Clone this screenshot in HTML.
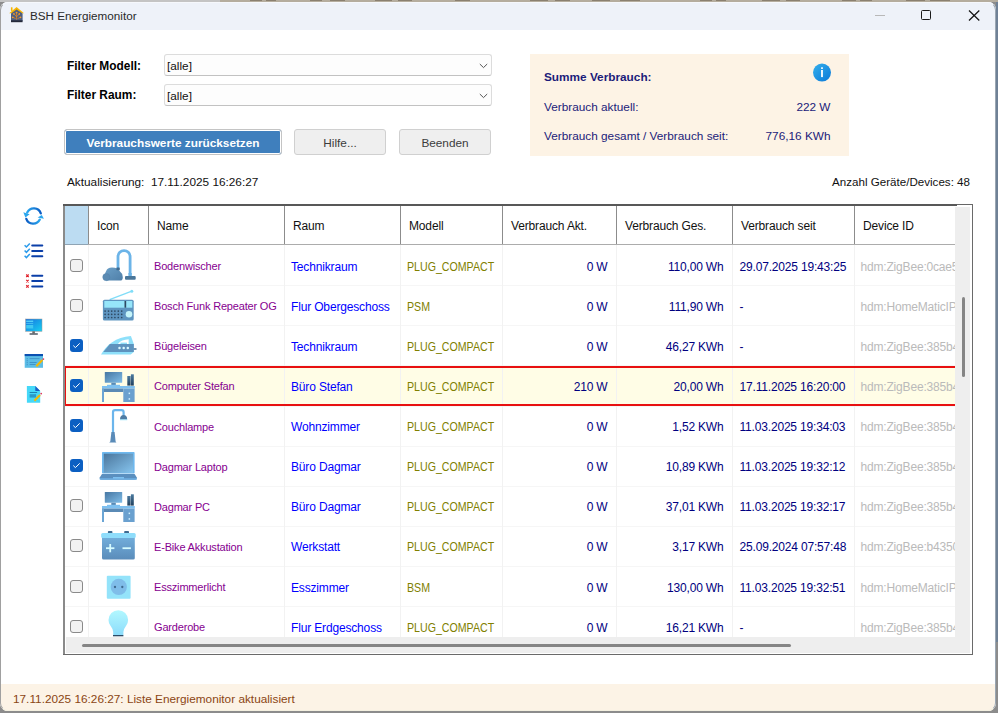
<!DOCTYPE html>
<html><head><meta charset="utf-8">
<style>
*{box-sizing:border-box}
html,body{margin:0;padding:0}
body{width:998px;height:713px;overflow:hidden;position:relative;background:#8c8c8c;font-family:"Liberation Sans",sans-serif;color:#000}
.abs{position:absolute}
.t{position:absolute;white-space:nowrap;line-height:1}
#win{left:0;top:0;width:998px;height:713px;background:#fff;clip-path:inset(2px 2px 2px 0 round 8px)}
#frame{left:0;top:2px;width:996px;height:709px;border:1px solid #a0a0a0;border-top-color:#f6f8fc;border-right-color:#9aa6b2;border-bottom-color:#f4f0e0;border-radius:8px;pointer-events:none}
.lbl{font-size:11.9px;font-weight:bold;color:#000}
.combo{position:absolute;left:164px;width:328px;height:22px;background:#fdfdfd;border:1px solid #dcdcdc;border-bottom-color:#c2c2c2;border-radius:3px}
.combo .v{left:2px;top:6px;font-size:11.8px;color:#111}
.btn{position:absolute;top:129px;height:26px;border:1px solid #d0d0d0;border-radius:3px;background:#efefef;font-size:11.8px;color:#3c3c3c;text-align:center;line-height:26px}
#panel{left:530px;top:54px;width:319px;height:102px;background:#fdf3e5}
#panel .t{color:#1b1b7a;font-size:11.8px}
#gclip{left:65px;top:206px;width:890px;height:431px;overflow:hidden}
.hd{top:14px;font-size:12px;letter-spacing:-0.15px;color:#111}
.nm{font-size:11px;letter-spacing:-0.18px;color:#860090}
.tx{font-size:12px;letter-spacing:-0.18px}
.rm{color:#0000ff;letter-spacing:-0.16px}
.md{color:#808000;transform:scaleX(0.885);transform-origin:0 0;letter-spacing:0}
.nu{color:#000080}
.di{color:#bababa}
.cb{position:absolute;width:13px;height:13px;border-radius:3px}
.cb.off{border:1px solid #8a8a8a;background:#f2f2f2}
.cb.on{background:#0b5fc2}
</style></head><body>
<div class="abs" style="left:0;top:0;width:998px;height:2px;background:#b5ad9e"></div>
<div class="abs" style="left:0;top:0;width:220px;height:2px;background:#c4c4c4"></div>
<div class="abs" style="left:250px;top:0;width:12px;height:1px;background:#8a8070"></div><div class="abs" style="left:266px;top:0;width:10px;height:1px;background:#8a8070"></div><div class="abs" style="left:310px;top:0;width:12px;height:1px;background:#8a8070"></div><div class="abs" style="left:330px;top:0;width:15px;height:1px;background:#8a8070"></div><div class="abs" style="left:375px;top:0;width:17px;height:1px;background:#8a8070"></div><div class="abs" style="left:398px;top:0;width:14px;height:1px;background:#8a8070"></div><div class="abs" style="left:455px;top:0;width:15px;height:1px;background:#8a8070"></div><div class="abs" style="left:530px;top:0;width:18px;height:1px;background:#8a8070"></div><div class="abs" style="left:555px;top:0;width:15px;height:1px;background:#8a8070"></div><div class="abs" style="left:592px;top:0;width:18px;height:1px;background:#8a8070"></div><div class="abs" style="left:620px;top:0;width:20px;height:1px;background:#8a8070"></div><div class="abs" style="left:700px;top:0;width:12px;height:1px;background:#8a8070"></div><div class="abs" style="left:716px;top:0;width:10px;height:1px;background:#8a8070"></div><div class="abs" style="left:762px;top:0;width:18px;height:1px;background:#8a8070"></div><div class="abs" style="left:786px;top:0;width:14px;height:1px;background:#8a8070"></div><div class="abs" style="left:842px;top:0;width:14px;height:1px;background:#8a8070"></div><div class="abs" style="left:860px;top:0;width:12px;height:1px;background:#8a8070"></div><div class="abs" style="left:906px;top:0;width:19px;height:1px;background:#8a8070"></div><div class="abs" style="left:930px;top:0;width:20px;height:1px;background:#8a8070"></div>
<div class="abs" style="left:996px;top:2px;width:2px;height:640px;background:#6f8196"></div>
<div class="abs" id="win">
  <div class="abs" style="left:0;top:0;width:998px;height:30px;background:#eef2f9"></div>
  <svg class="abs" style="left:8px;top:6px" width="18" height="18" viewBox="8 6 18 18">
    <path d="M9.2 13.3L16.6 6.9L24 13.3Z" fill="#f7b500"/>
    <rect x="10.9" y="7.3" width="1.6" height="3.6" fill="#f7b500"/>
    <path d="M11 21V13.6L16.6 9.4L22.6 13.6V21Z" fill="#4e5f80"/>
    <rect x="11" y="20.3" width="11.6" height="1.9" fill="#23293a"/>
    <g stroke="#f08a1c" stroke-width="0.7" fill="none"><path d="M16.6 19.8V12.8M16.6 16.8L14.2 14.2M16.6 16.8L19 14.2M15.6 18.6L13 17.4M17.6 18.6L20.2 17.4"/></g>
    <g fill="#f59a2a"><circle cx="16.6" cy="12.6" r="0.95"/><circle cx="13.9" cy="13.9" r="0.85"/><circle cx="19.3" cy="13.9" r="0.85"/><circle cx="12.7" cy="17.3" r="0.85"/><circle cx="20.5" cy="17.3" r="0.85"/></g>
  </svg>
  <div class="t" style="left:30px;top:9.5px;font-size:11.7px;color:#2a2a2a;-webkit-font-smoothing:antialiased">BSH Energiemonitor</div>
  <div class="abs" style="left:875px;top:15px;width:10px;height:1px;background:#b8b8b8"></div>
  <div class="abs" style="left:921px;top:10px;width:10px;height:10px;border:1.2px solid #1a1a1a;border-radius:1.5px"></div>
  <svg class="abs" style="left:966.5px;top:7.5px" width="14" height="14" viewBox="0 0 14 14"><path d="M2 2.5L12.3 12.5M12.3 2.5L2 12.5" stroke="#151515" stroke-width="1.25"/></svg>

  <div class="t lbl" style="left:67px;top:61px">Filter Modell:</div>
  <div class="t lbl" style="left:67px;top:90px">Filter Raum:</div>
  <div class="combo" style="top:54px"><span class="t v">[alle]</span>
    <svg class="abs" style="left:314px;top:8px" width="9" height="6" viewBox="0 0 9 6"><path d="M0.8 1L4.5 4.6L8.2 1" fill="none" stroke="#555" stroke-width="1"/></svg></div>
  <div class="combo" style="top:84px"><span class="t v">[alle]</span>
    <svg class="abs" style="left:314px;top:8px" width="9" height="6" viewBox="0 0 9 6"><path d="M0.8 1L4.5 4.6L8.2 1" fill="none" stroke="#555" stroke-width="1"/></svg></div>

  <div class="btn" style="left:64px;width:218px;background:#3f7fbd;border-color:#c4c4c4;color:#fff;font-weight:bold;box-shadow:inset 0 0 0 1px #fff">Verbrauchswerte zurücksetzen</div>
  <div class="btn" style="left:294px;width:92px">Hilfe...</div>
  <div class="btn" style="left:399px;width:92px">Beenden</div>

  <div class="t" style="left:67px;top:177px;font-size:11.8px;color:#111">Aktualisierung:&nbsp; 17.11.2025 16:26:27</div>
  <div class="t" style="right:28px;top:176px;font-size:11.6px;color:#111">Anzahl Geräte/Devices: 48</div>

  <div class="abs" id="panel">
    <div class="t" style="left:14px;top:17.5px;font-weight:bold">Summe Verbrauch:</div>
    <div class="t" style="left:14px;top:48px">Verbrauch aktuell:</div>
    <div class="t" style="right:18.5px;top:48px">222 W</div>
    <div class="t" style="left:14px;top:77px">Verbrauch gesamt / Verbrauch seit:</div>
    <div class="t" style="right:18.5px;top:77px">776,16 KWh</div>
    <svg class="abs" style="left:283px;top:9px" width="18" height="19" viewBox="0 0 18 19">
      <defs><linearGradient id="gi" x1="0" y1="0" x2="1" y2="1"><stop offset="0" stop-color="#35b0ec"/><stop offset="1" stop-color="#0a78d8"/></linearGradient></defs>
      <circle cx="9" cy="9.6" r="9" fill="url(#gi)"/>
      <rect x="8.1" y="4.2" width="1.8" height="1.8" rx="0.4" fill="#fff"/>
      <rect x="8.1" y="7" width="1.8" height="7.1" fill="#fff"/>
    </svg>
  </div>

  <svg class="abs" style="left:15px;top:195px" width="40" height="215" viewBox="15 195 40 215">
<defs>
<linearGradient id="gr1" x1="1" y1="0" x2="0" y2="0"><stop offset="0" stop-color="#0b5cc4"/><stop offset="1" stop-color="#2aa6ee"/></linearGradient>
<linearGradient id="gr2" x1="0" y1="0" x2="1" y2="0"><stop offset="0" stop-color="#0b5cc4"/><stop offset="1" stop-color="#2aa6ee"/></linearGradient>
<linearGradient id="gmon" x1="0" y1="0" x2="1" y2="1"><stop offset="0" stop-color="#1670e0"/><stop offset="1" stop-color="#18d0f0"/></linearGradient>
</defs>
<path d="M40.8 213.4A7.35 7.35 0 0 0 27.2 212.6" fill="none" stroke="url(#gr1)" stroke-width="2.3" stroke-linecap="round"/>
<path d="M23.3 212.2L29.6 214.3L25.4 217.4Z" fill="#2aa6ee"/>
<path d="M26.3 218.9A7.35 7.35 0 0 0 39.8 219.6" fill="none" stroke="url(#gr2)" stroke-width="2.3" stroke-linecap="round"/>
<path d="M43.9 218.8L37.6 217.6L41.8 214.9Z" fill="#2aa6ee"/>
<g fill="none" stroke="#2b9beb" stroke-width="1.5">
<path d="M24.6 245.2L26.4 247L29.8 243.4"/><path d="M24.6 250.5L26.4 252.3L29.8 248.7"/><path d="M24.6 255.8L26.4 257.6L29.8 254"/></g>
<g stroke="#0b3fa8" stroke-width="2" stroke-linecap="round">
<line x1="32.2" y1="245.4" x2="42.3" y2="245.4"/><line x1="32.2" y1="250.9" x2="42.3" y2="250.9"/><line x1="32.2" y1="256.2" x2="42.3" y2="256.2"/>
<line x1="32.2" y1="275.8" x2="42.3" y2="275.8"/><line x1="32.2" y1="281" x2="42.3" y2="281"/><line x1="32.2" y1="286.5" x2="42.3" y2="286.5"/></g>
<g stroke="#e0202a" stroke-width="1.1">
<path d="M26.2 274.5L28.7 277M28.7 274.5L26.2 277"/><path d="M26.2 279.8L28.7 282.3M28.7 279.8L26.2 282.3"/><path d="M26.2 285.2L28.7 287.7M28.7 285.2L26.2 287.7"/></g>
<rect x="25.6" y="319" width="16.4" height="12.3" fill="url(#gmon)" stroke="#9a9a9a" stroke-width="0.5"/>
<rect x="26.2" y="320.6" width="7" height="1.3" fill="#5ad8f8"/><rect x="26.2" y="322.9" width="7" height="1" fill="#4ac0f0"/><rect x="26.2" y="325" width="7" height="3.5" fill="#40c8f0"/>
<rect x="32.3" y="331.3" width="2.6" height="2.2" fill="#6a6a6a"/><rect x="29.4" y="333.2" width="8.6" height="1.6" rx="0.7" fill="#505a64"/>
<rect x="24.7" y="354" width="18.3" height="13.8" fill="#5cbde6"/><rect x="24.7" y="354" width="18.3" height="2.1" fill="#0b50b0"/>
<g fill="#3a8ac0"><rect x="26.7" y="358.2" width="1" height="1"/><rect x="26.7" y="360.2" width="1" height="1"/><rect x="26.7" y="362.2" width="1" height="1"/><rect x="26.7" y="364.2" width="1" height="1"/>
<rect x="29.6" y="358.3" width="10" height="0.8"/><rect x="29.6" y="362.2" width="7" height="0.8"/><rect x="29.6" y="364.1" width="6" height="0.8"/></g>
<line x1="36.3" y1="366.2" x2="42.4" y2="360.1" stroke="#f5b800" stroke-width="2.1"/><circle cx="43.4" cy="359.1" r="0.9" fill="#e03a5a"/>
<path d="M26.9 385.9H35.3L40.2 391V402.8H26.9Z" fill="#45d8f8"/><path d="M35.3 385.9L40.2 391H35.3Z" fill="#1a5fc6"/>
<rect x="29.6" y="392" width="7.5" height="0.9" fill="#1a7aa8"/><rect x="29.6" y="394.2" width="6.5" height="3.4" fill="#2a9ac8"/>
<line x1="34.4" y1="400.8" x2="40" y2="395" stroke="#f5b800" stroke-width="2.1"/><circle cx="41.2" cy="393.6" r="0.9" fill="#e03a5a"/>
</svg>

  <div class="abs" style="left:63px;top:204px;width:910px;height:451px;background:#fff"></div>
  <div class="abs" style="left:955px;top:207px;width:15px;height:446px;background:#eeeeee"></div>
  <div class="abs" style="left:66px;top:637px;width:904px;height:16px;background:#eeeeee"></div>
  <div class="abs" id="gclip">
  <div class="abs" style="left:0;top:0;width:890px;height:39px;background:#fff"></div>
<div class="abs" style="left:0;top:0;width:23px;height:38px;background:#bcdcf2"></div>
<div class="t hd" style="left:32.00px">Icon</div>
<div class="t hd" style="left:92.00px">Name</div>
<div class="t hd" style="left:228.00px">Raum</div>
<div class="t hd" style="left:344.00px">Modell</div>
<div class="t hd" style="left:446.00px">Verbrauch Akt.</div>
<div class="t hd" style="left:560.00px">Verbrauch Ges.</div>
<div class="t hd" style="left:676.00px">Verbrauch seit</div>
<div class="t hd" style="left:798.00px">Device ID</div>
<div class="abs" style="left:23.00px;top:0;width:1px;height:38px;background:#8c8c8c"></div>
<div class="abs" style="left:83.00px;top:0;width:1px;height:38px;background:#8c8c8c"></div>
<div class="abs" style="left:219.00px;top:0;width:1px;height:38px;background:#8c8c8c"></div>
<div class="abs" style="left:335.00px;top:0;width:1px;height:38px;background:#8c8c8c"></div>
<div class="abs" style="left:437.00px;top:0;width:1px;height:38px;background:#8c8c8c"></div>
<div class="abs" style="left:551.00px;top:0;width:1px;height:38px;background:#8c8c8c"></div>
<div class="abs" style="left:667.00px;top:0;width:1px;height:38px;background:#8c8c8c"></div>
<div class="abs" style="left:789.00px;top:0;width:1px;height:38px;background:#8c8c8c"></div>
<div class="abs" style="left:0;top:38px;width:890px;height:2px;background:#acacac"></div>
<div class="abs" style="left:0;top:38px;width:23px;height:2px;background:#8fa4b4"></div>
<div class="abs" style="left:0;top:39.00px;width:890px;height:40px;background:#fff"></div>
<div class="abs" style="left:23.00px;top:39.00px;width:1px;height:40.2px;background:#f2f2f2"></div>
<div class="abs" style="left:83.00px;top:39.00px;width:1px;height:40.2px;background:#f2f2f2"></div>
<div class="abs" style="left:219.00px;top:39.00px;width:1px;height:40.2px;background:#f2f2f2"></div>
<div class="abs" style="left:335.00px;top:39.00px;width:1px;height:40.2px;background:#f2f2f2"></div>
<div class="abs" style="left:437.00px;top:39.00px;width:1px;height:40.2px;background:#f2f2f2"></div>
<div class="abs" style="left:551.00px;top:39.00px;width:1px;height:40.2px;background:#f2f2f2"></div>
<div class="abs" style="left:667.00px;top:39.00px;width:1px;height:40.2px;background:#f2f2f2"></div>
<div class="abs" style="left:789.00px;top:39.00px;width:1px;height:40.2px;background:#f2f2f2"></div>
<div class="cb off" style="left:5px;top:52.50px"></div>
<svg class="abs" style="left:30.00px;top:39.00px" width="50" height="40" viewBox="0 0 50 40"><defs><linearGradient id="gv" x1="0" y1="0" x2="1" y2="1"><stop offset="0" stop-color="#6a9ec6"/><stop offset="1" stop-color="#4f7fa8"/></linearGradient></defs>
<path d="M23 23.5V11.6A6.05 6.05 0 0 1 35.1 11.6V29.5" fill="none" stroke="#6cb4e8" stroke-width="2.8"/>
<rect x="33.4" y="28" width="3.4" height="3.3" fill="#6cb4e8"/>
<path d="M11 35.6H25.2Q27.8 35.6 27.8 32.2Q27.8 28.6 25 26.6Q23.4 22.4 17 22.4Q12.2 22.4 11.2 26Q10 27.5 10 30Z" fill="url(#gv)"/>
<circle cx="11.3" cy="32.1" r="3.6" fill="#5a8ab2" stroke="#4f7fa8" stroke-width="0.4"/>
<rect x="21.4" y="22.4" width="3.4" height="2.8" rx="0.6" fill="#3f6a8f"/>
<rect x="30" y="31.1" width="10.7" height="3.7" rx="1" fill="#4a7699"/></svg>
<div class="t nm" style="left:89.00px;top:55.00px">Bodenwischer</div>
<div class="t tx rm" style="left:226.00px;top:54.50px">Technikraum</div>
<div class="t tx md" style="left:342.00px;top:54.50px">PLUG_COMPACT</div>
<div class="t tx nu" style="right:347.50px;top:54.50px">0 W</div>
<div class="t tx nu" style="right:231.50px;top:54.50px">110,00 Wh</div>
<div class="t tx nu" style="left:674.50px;top:54.50px">29.07.2025 19:43:25</div>
<div class="t tx di" style="left:795.50px;top:54.50px">hdm:ZigBee:0cae5ffe0b123</div>
<div class="abs" style="left:0;top:79.14px;width:890px;height:40px;background:#fff"></div>
<div class="abs" style="left:0;top:79.14px;width:890px;height:1px;background:#f6f6f6"></div>
<div class="abs" style="left:23.00px;top:79.14px;width:1px;height:40.2px;background:#f2f2f2"></div>
<div class="abs" style="left:83.00px;top:79.14px;width:1px;height:40.2px;background:#f2f2f2"></div>
<div class="abs" style="left:219.00px;top:79.14px;width:1px;height:40.2px;background:#f2f2f2"></div>
<div class="abs" style="left:335.00px;top:79.14px;width:1px;height:40.2px;background:#f2f2f2"></div>
<div class="abs" style="left:437.00px;top:79.14px;width:1px;height:40.2px;background:#f2f2f2"></div>
<div class="abs" style="left:551.00px;top:79.14px;width:1px;height:40.2px;background:#f2f2f2"></div>
<div class="abs" style="left:667.00px;top:79.14px;width:1px;height:40.2px;background:#f2f2f2"></div>
<div class="abs" style="left:789.00px;top:79.14px;width:1px;height:40.2px;background:#f2f2f2"></div>
<div class="cb off" style="left:5px;top:92.64px"></div>
<svg class="abs" style="left:30.00px;top:79.00px" width="50" height="40" viewBox="0 0 50 40"><line x1="14.6" y1="14.6" x2="36.8" y2="6.2" stroke="#80ddf8" stroke-width="1.3"/>
<circle cx="36.8" cy="6.2" r="1.5" fill="#80ddf8"/>
<rect x="7.9" y="14.7" width="30.8" height="20.9" rx="1.6" fill="#5e95c0"/>
<rect x="9.3" y="16" width="28" height="6.7" fill="#96e6fa"/>
<rect x="29.5" y="16" width="1.7" height="6.7" fill="#2e4a63"/>
<circle cx="34" cy="29.3" r="3.3" fill="#c5f5fa"/>
<circle cx="10.1" cy="26.1" r="0.85" fill="#2e4a63"/><circle cx="13.5" cy="26.1" r="0.85" fill="#2e4a63"/><circle cx="16.7" cy="26.1" r="0.85" fill="#2e4a63"/><circle cx="19.9" cy="26.1" r="0.85" fill="#2e4a63"/><circle cx="23.3" cy="26.1" r="0.85" fill="#2e4a63"/><circle cx="26.7" cy="26.1" r="0.85" fill="#2e4a63"/><circle cx="10.1" cy="29.3" r="0.85" fill="#2e4a63"/><circle cx="13.5" cy="29.3" r="0.85" fill="#2e4a63"/><circle cx="16.7" cy="29.3" r="0.85" fill="#2e4a63"/><circle cx="19.9" cy="29.3" r="0.85" fill="#2e4a63"/><circle cx="23.3" cy="29.3" r="0.85" fill="#2e4a63"/><circle cx="26.7" cy="29.3" r="0.85" fill="#2e4a63"/><circle cx="10.1" cy="32.5" r="0.85" fill="#2e4a63"/><circle cx="13.5" cy="32.5" r="0.85" fill="#2e4a63"/><circle cx="16.7" cy="32.5" r="0.85" fill="#2e4a63"/><circle cx="19.9" cy="32.5" r="0.85" fill="#2e4a63"/><circle cx="23.3" cy="32.5" r="0.85" fill="#2e4a63"/><circle cx="26.7" cy="32.5" r="0.85" fill="#2e4a63"/></svg>
<div class="t nm" style="left:89.00px;top:95.14px">Bosch Funk Repeater OG</div>
<div class="t tx rm" style="left:226.00px;top:94.64px">Flur Obergeschoss</div>
<div class="t tx md" style="left:342.00px;top:94.64px">PSM</div>
<div class="t tx nu" style="right:347.50px;top:94.64px">0 W</div>
<div class="t tx nu" style="right:231.50px;top:94.64px">111,90 Wh</div>
<div class="t tx nu" style="left:674.50px;top:94.64px">-</div>
<div class="t tx di" style="left:795.50px;top:94.64px">hdm:HomeMaticIP:3014F711</div>
<div class="abs" style="left:0;top:119.28px;width:890px;height:40px;background:#fff"></div>
<div class="abs" style="left:0;top:119.28px;width:890px;height:1px;background:#f6f6f6"></div>
<div class="abs" style="left:23.00px;top:119.28px;width:1px;height:40.2px;background:#f2f2f2"></div>
<div class="abs" style="left:83.00px;top:119.28px;width:1px;height:40.2px;background:#f2f2f2"></div>
<div class="abs" style="left:219.00px;top:119.28px;width:1px;height:40.2px;background:#f2f2f2"></div>
<div class="abs" style="left:335.00px;top:119.28px;width:1px;height:40.2px;background:#f2f2f2"></div>
<div class="abs" style="left:437.00px;top:119.28px;width:1px;height:40.2px;background:#f2f2f2"></div>
<div class="abs" style="left:551.00px;top:119.28px;width:1px;height:40.2px;background:#f2f2f2"></div>
<div class="abs" style="left:667.00px;top:119.28px;width:1px;height:40.2px;background:#f2f2f2"></div>
<div class="abs" style="left:789.00px;top:119.28px;width:1px;height:40.2px;background:#f2f2f2"></div>
<div class="cb on" style="left:5px;top:132.78px"><svg width="13" height="13" viewBox="0 0 13 13" style="position:absolute;left:0;top:0"><path d="M3.3 6.6L5.4 8.6L9.7 4.4" fill="none" stroke="#fff" stroke-width="1"/></svg></div>
<svg class="abs" style="left:30.00px;top:119.00px" width="50" height="40" viewBox="0 0 50 40"><path d="M6 29.6C11 20 21 12 35.9 10.9L38.8 19V27L35.7 29.6Z" fill="#8ee0fa"/>
<path d="M22.7 19.2C25 16 29 14.6 33.7 14.3V19.2Z" fill="#fff"/>
<rect x="25.5" y="17.6" width="6.5" height="1.6" fill="#8ee0fa"/>
<path d="M8.3 27.1L14.9 19.1H38.8V27.1Z" fill="#5e93be"/>
<circle cx="24.5" cy="22.9" r="1.25" fill="#d8f8ff"/><circle cx="28.7" cy="22.9" r="1.25" fill="#d8f8ff"/><circle cx="32.8" cy="22.9" r="1.25" fill="#d8f8ff"/>
<rect x="38.8" y="23.3" width="2.7" height="1.4" fill="#3f6a8f"/></svg>
<div class="t nm" style="left:89.00px;top:135.28px">Bügeleisen</div>
<div class="t tx rm" style="left:226.00px;top:134.78px">Technikraum</div>
<div class="t tx md" style="left:342.00px;top:134.78px">PLUG_COMPACT</div>
<div class="t tx nu" style="right:347.50px;top:134.78px">0 W</div>
<div class="t tx nu" style="right:231.50px;top:134.78px">46,27 KWh</div>
<div class="t tx nu" style="left:674.50px;top:134.78px">-</div>
<div class="t tx di" style="left:795.50px;top:134.78px">hdm:ZigBee:385b44fff</div>
<div class="abs" style="left:0;top:159.42px;width:890px;height:40px;background:#fffde6"></div>
<div class="abs" style="left:0;top:159.42px;width:890px;height:1px;background:#f6f6f6"></div>
<div class="abs" style="left:23.00px;top:159.42px;width:1px;height:40.2px;background:#f2f2f2"></div>
<div class="abs" style="left:83.00px;top:159.42px;width:1px;height:40.2px;background:#f2f2f2"></div>
<div class="abs" style="left:219.00px;top:159.42px;width:1px;height:40.2px;background:#f2f2f2"></div>
<div class="abs" style="left:335.00px;top:159.42px;width:1px;height:40.2px;background:#f2f2f2"></div>
<div class="abs" style="left:437.00px;top:159.42px;width:1px;height:40.2px;background:#f2f2f2"></div>
<div class="abs" style="left:551.00px;top:159.42px;width:1px;height:40.2px;background:#f2f2f2"></div>
<div class="abs" style="left:667.00px;top:159.42px;width:1px;height:40.2px;background:#f2f2f2"></div>
<div class="abs" style="left:789.00px;top:159.42px;width:1px;height:40.2px;background:#f2f2f2"></div>
<div class="cb on" style="left:5px;top:172.92px"><svg width="13" height="13" viewBox="0 0 13 13" style="position:absolute;left:0;top:0"><path d="M3.3 6.6L5.4 8.6L9.7 4.4" fill="none" stroke="#fff" stroke-width="1"/></svg></div>
<svg class="abs" style="left:30.00px;top:159.00px" width="50" height="40" viewBox="0 0 50 40"><defs><linearGradient id="gm3" x1="0" y1="0" x2="1" y2="1"><stop offset="0" stop-color="#4676a2"/><stop offset="1" stop-color="#80bde8"/></linearGradient>
<linearGradient id="gb3" x1="0" y1="0" x2="0" y2="1"><stop offset="0" stop-color="#4a7aa0"/><stop offset="1" stop-color="#22405c"/></linearGradient></defs>
<rect x="9.8" y="7" width="17.4" height="10.8" rx="0.5" fill="url(#gm3)"/>
<rect x="16.3" y="17.8" width="4.5" height="2.3" fill="#5a8ab5"/>
<rect x="12" y="19.8" width="13" height="1.3" fill="#7ec0f0"/>
<rect x="32.3" y="11" width="3.3" height="9.6" fill="url(#gb3)"/>
<rect x="35.9" y="9.3" width="2.9" height="11.3" fill="url(#gb3)"/>
<rect x="7" y="21" width="32.8" height="2.6" fill="#7ec0f0"/>
<rect x="7" y="23.6" width="21.3" height="3.4" fill="#5a8ab5"/>
<rect x="7" y="23.6" width="2" height="13.4" fill="#6aa5d5"/>
<rect x="28.3" y="23.6" width="11.3" height="13.4" fill="#6aa0cf"/>
<rect x="33.6" y="27.6" width="1.5" height="1.5" fill="#d0f0ff"/>
<rect x="33.6" y="33.2" width="1.5" height="1.5" fill="#d0f0ff"/></svg>
<div class="t nm" style="left:89.00px;top:175.42px">Computer Stefan</div>
<div class="t tx rm" style="left:226.00px;top:174.92px">Büro Stefan</div>
<div class="t tx md" style="left:342.00px;top:174.92px">PLUG_COMPACT</div>
<div class="t tx nu" style="right:347.50px;top:174.92px">210 W</div>
<div class="t tx nu" style="right:231.50px;top:174.92px">20,00 Wh</div>
<div class="t tx nu" style="left:674.50px;top:174.92px">17.11.2025 16:20:00</div>
<div class="t tx di" style="left:795.50px;top:174.92px">hdm:ZigBee:385b44fff</div>
<div class="abs" style="left:0;top:160.42px;width:890px;height:2px;background:#e81010"></div>
<div class="abs" style="left:0;top:198.42px;width:890px;height:2px;background:#e81010"></div>
<div class="abs" style="left:0;top:160.42px;width:1px;height:40px;background:#e81010"></div>
<div class="abs" style="left:0;top:199.56px;width:890px;height:40px;background:#fff"></div>
<div class="abs" style="left:0;top:199.56px;width:890px;height:1px;background:#f6f6f6"></div>
<div class="abs" style="left:23.00px;top:199.56px;width:1px;height:40.2px;background:#f2f2f2"></div>
<div class="abs" style="left:83.00px;top:199.56px;width:1px;height:40.2px;background:#f2f2f2"></div>
<div class="abs" style="left:219.00px;top:199.56px;width:1px;height:40.2px;background:#f2f2f2"></div>
<div class="abs" style="left:335.00px;top:199.56px;width:1px;height:40.2px;background:#f2f2f2"></div>
<div class="abs" style="left:437.00px;top:199.56px;width:1px;height:40.2px;background:#f2f2f2"></div>
<div class="abs" style="left:551.00px;top:199.56px;width:1px;height:40.2px;background:#f2f2f2"></div>
<div class="abs" style="left:667.00px;top:199.56px;width:1px;height:40.2px;background:#f2f2f2"></div>
<div class="abs" style="left:789.00px;top:199.56px;width:1px;height:40.2px;background:#f2f2f2"></div>
<div class="cb on" style="left:5px;top:213.06px"><svg width="13" height="13" viewBox="0 0 13 13" style="position:absolute;left:0;top:0"><path d="M3.3 6.6L5.4 8.6L9.7 4.4" fill="none" stroke="#fff" stroke-width="1"/></svg></div>
<svg class="abs" style="left:30.00px;top:199.00px" width="50" height="40" viewBox="0 0 50 40"><path d="M18 28V7.2Q18 5.1 20.1 5.1H26.5Q28.6 5.1 28.6 7.2V10.5" fill="none" stroke="#6bb5ec" stroke-width="2.2"/>
<path d="M25 14.6Q25 10 28.6 10Q32.2 10 32.2 14.6Z" fill="#4e7ca4"/>
<rect x="25" y="14.4" width="7.2" height="0.8" fill="#8ee0fa"/>
<path d="M16.4 27H19.6L20.6 36.4L21.4 37.6H14.2L15.3 36.4Z" fill="#5a8bb8"/></svg>
<div class="t nm" style="left:89.00px;top:215.56px">Couchlampe</div>
<div class="t tx rm" style="left:226.00px;top:215.06px">Wohnzimmer</div>
<div class="t tx md" style="left:342.00px;top:215.06px">PLUG_COMPACT</div>
<div class="t tx nu" style="right:347.50px;top:215.06px">0 W</div>
<div class="t tx nu" style="right:231.50px;top:215.06px">1,52 KWh</div>
<div class="t tx nu" style="left:674.50px;top:215.06px">11.03.2025 19:34:03</div>
<div class="t tx di" style="left:795.50px;top:215.06px">hdm:ZigBee:385b44fff</div>
<div class="abs" style="left:0;top:239.70px;width:890px;height:40px;background:#fff"></div>
<div class="abs" style="left:0;top:239.70px;width:890px;height:1px;background:#f6f6f6"></div>
<div class="abs" style="left:23.00px;top:239.70px;width:1px;height:40.2px;background:#f2f2f2"></div>
<div class="abs" style="left:83.00px;top:239.70px;width:1px;height:40.2px;background:#f2f2f2"></div>
<div class="abs" style="left:219.00px;top:239.70px;width:1px;height:40.2px;background:#f2f2f2"></div>
<div class="abs" style="left:335.00px;top:239.70px;width:1px;height:40.2px;background:#f2f2f2"></div>
<div class="abs" style="left:437.00px;top:239.70px;width:1px;height:40.2px;background:#f2f2f2"></div>
<div class="abs" style="left:551.00px;top:239.70px;width:1px;height:40.2px;background:#f2f2f2"></div>
<div class="abs" style="left:667.00px;top:239.70px;width:1px;height:40.2px;background:#f2f2f2"></div>
<div class="abs" style="left:789.00px;top:239.70px;width:1px;height:40.2px;background:#f2f2f2"></div>
<div class="cb on" style="left:5px;top:253.20px"><svg width="13" height="13" viewBox="0 0 13 13" style="position:absolute;left:0;top:0"><path d="M3.3 6.6L5.4 8.6L9.7 4.4" fill="none" stroke="#fff" stroke-width="1"/></svg></div>
<svg class="abs" style="left:30.00px;top:239.00px" width="50" height="40" viewBox="0 0 50 40"><defs><linearGradient id="gl" x1="0" y1="0" x2="1" y2="1"><stop offset="0" stop-color="#4b769c"/><stop offset="1" stop-color="#86c4ee"/></linearGradient></defs>
<rect x="7" y="7" width="32.6" height="21.6" rx="0.8" fill="#6eb8ee"/>
<rect x="8.8" y="8.7" width="29.2" height="19.1" fill="url(#gl)"/>
<path d="M7 29H39.6L42 32.8Q42 34.8 40 34.8H6.5Q4.5 34.8 4.5 32.8Z" fill="#5a8fbf"/>
<rect x="4.6" y="33.3" width="37.3" height="1.5" rx="0.7" fill="#6eb0e4"/>
<rect x="18" y="32" width="11" height="1.6" fill="#7ec0f0"/></svg>
<div class="t nm" style="left:89.00px;top:255.70px">Dagmar Laptop</div>
<div class="t tx rm" style="left:226.00px;top:255.20px">Büro Dagmar</div>
<div class="t tx md" style="left:342.00px;top:255.20px">PLUG_COMPACT</div>
<div class="t tx nu" style="right:347.50px;top:255.20px">0 W</div>
<div class="t tx nu" style="right:231.50px;top:255.20px">10,89 KWh</div>
<div class="t tx nu" style="left:674.50px;top:255.20px">11.03.2025 19:32:12</div>
<div class="t tx di" style="left:795.50px;top:255.20px">hdm:ZigBee:385b44fff</div>
<div class="abs" style="left:0;top:279.84px;width:890px;height:40px;background:#fff"></div>
<div class="abs" style="left:0;top:279.84px;width:890px;height:1px;background:#f6f6f6"></div>
<div class="abs" style="left:23.00px;top:279.84px;width:1px;height:40.2px;background:#f2f2f2"></div>
<div class="abs" style="left:83.00px;top:279.84px;width:1px;height:40.2px;background:#f2f2f2"></div>
<div class="abs" style="left:219.00px;top:279.84px;width:1px;height:40.2px;background:#f2f2f2"></div>
<div class="abs" style="left:335.00px;top:279.84px;width:1px;height:40.2px;background:#f2f2f2"></div>
<div class="abs" style="left:437.00px;top:279.84px;width:1px;height:40.2px;background:#f2f2f2"></div>
<div class="abs" style="left:551.00px;top:279.84px;width:1px;height:40.2px;background:#f2f2f2"></div>
<div class="abs" style="left:667.00px;top:279.84px;width:1px;height:40.2px;background:#f2f2f2"></div>
<div class="abs" style="left:789.00px;top:279.84px;width:1px;height:40.2px;background:#f2f2f2"></div>
<div class="cb off" style="left:5px;top:293.34px"></div>
<svg class="abs" style="left:30.00px;top:279.00px" width="50" height="40" viewBox="0 0 50 40"><defs><linearGradient id="gm6" x1="0" y1="0" x2="1" y2="1"><stop offset="0" stop-color="#4676a2"/><stop offset="1" stop-color="#80bde8"/></linearGradient>
<linearGradient id="gb6" x1="0" y1="0" x2="0" y2="1"><stop offset="0" stop-color="#4a7aa0"/><stop offset="1" stop-color="#22405c"/></linearGradient></defs>
<rect x="9.8" y="7" width="17.4" height="10.8" rx="0.5" fill="url(#gm6)"/>
<rect x="16.3" y="17.8" width="4.5" height="2.3" fill="#5a8ab5"/>
<rect x="12" y="19.8" width="13" height="1.3" fill="#7ec0f0"/>
<rect x="32.3" y="11" width="3.3" height="9.6" fill="url(#gb6)"/>
<rect x="35.9" y="9.3" width="2.9" height="11.3" fill="url(#gb6)"/>
<rect x="7" y="21" width="32.8" height="2.6" fill="#7ec0f0"/>
<rect x="7" y="23.6" width="21.3" height="3.4" fill="#5a8ab5"/>
<rect x="7" y="23.6" width="2" height="13.4" fill="#6aa5d5"/>
<rect x="28.3" y="23.6" width="11.3" height="13.4" fill="#6aa0cf"/>
<rect x="33.6" y="27.6" width="1.5" height="1.5" fill="#d0f0ff"/>
<rect x="33.6" y="33.2" width="1.5" height="1.5" fill="#d0f0ff"/></svg>
<div class="t nm" style="left:89.00px;top:295.84px">Dagmar PC</div>
<div class="t tx rm" style="left:226.00px;top:295.34px">Büro Dagmar</div>
<div class="t tx md" style="left:342.00px;top:295.34px">PLUG_COMPACT</div>
<div class="t tx nu" style="right:347.50px;top:295.34px">0 W</div>
<div class="t tx nu" style="right:231.50px;top:295.34px">37,01 KWh</div>
<div class="t tx nu" style="left:674.50px;top:295.34px">11.03.2025 19:32:17</div>
<div class="t tx di" style="left:795.50px;top:295.34px">hdm:ZigBee:385b44fff</div>
<div class="abs" style="left:0;top:319.98px;width:890px;height:40px;background:#fff"></div>
<div class="abs" style="left:0;top:319.98px;width:890px;height:1px;background:#f6f6f6"></div>
<div class="abs" style="left:23.00px;top:319.98px;width:1px;height:40.2px;background:#f2f2f2"></div>
<div class="abs" style="left:83.00px;top:319.98px;width:1px;height:40.2px;background:#f2f2f2"></div>
<div class="abs" style="left:219.00px;top:319.98px;width:1px;height:40.2px;background:#f2f2f2"></div>
<div class="abs" style="left:335.00px;top:319.98px;width:1px;height:40.2px;background:#f2f2f2"></div>
<div class="abs" style="left:437.00px;top:319.98px;width:1px;height:40.2px;background:#f2f2f2"></div>
<div class="abs" style="left:551.00px;top:319.98px;width:1px;height:40.2px;background:#f2f2f2"></div>
<div class="abs" style="left:667.00px;top:319.98px;width:1px;height:40.2px;background:#f2f2f2"></div>
<div class="abs" style="left:789.00px;top:319.98px;width:1px;height:40.2px;background:#f2f2f2"></div>
<div class="cb off" style="left:5px;top:333.48px"></div>
<svg class="abs" style="left:30.00px;top:319.00px" width="50" height="40" viewBox="0 0 50 40"><defs><linearGradient id="gt" x1="0" y1="0" x2="0" y2="1"><stop offset="0" stop-color="#72aedb"/><stop offset="1" stop-color="#5a8cba"/></linearGradient></defs>
<rect x="12.9" y="5.9" width="4.5" height="2.8" rx="0.8" fill="#3f6a8f"/>
<rect x="29.2" y="5.9" width="4.8" height="2.8" rx="0.8" fill="#3f6a8f"/>
<path d="M7 12H39.8V33Q39.8 34.6 38.2 34.6H8.6Q7 34.6 7 33Z" fill="url(#gt)"/>
<rect x="6.2" y="8.1" width="34.5" height="4.9" rx="1.5" fill="#8fddfb"/>
<rect x="11" y="22.3" width="8.4" height="1.8" fill="#d5fbff"/>
<rect x="14.3" y="19" width="1.8" height="8.3" fill="#d5fbff"/>
<rect x="27.5" y="22.3" width="8.4" height="1.8" fill="#d5fbff"/></svg>
<div class="t nm" style="left:89.00px;top:335.98px">E-Bike Akkustation</div>
<div class="t tx rm" style="left:226.00px;top:335.48px">Werkstatt</div>
<div class="t tx md" style="left:342.00px;top:335.48px">PLUG_COMPACT</div>
<div class="t tx nu" style="right:347.50px;top:335.48px">0 W</div>
<div class="t tx nu" style="right:231.50px;top:335.48px">3,17 KWh</div>
<div class="t tx nu" style="left:674.50px;top:335.48px">25.09.2024 07:57:48</div>
<div class="t tx di" style="left:795.50px;top:335.48px">hdm:ZigBee:b4350fff</div>
<div class="abs" style="left:0;top:360.12px;width:890px;height:40px;background:#fff"></div>
<div class="abs" style="left:0;top:360.12px;width:890px;height:1px;background:#f6f6f6"></div>
<div class="abs" style="left:23.00px;top:360.12px;width:1px;height:40.2px;background:#f2f2f2"></div>
<div class="abs" style="left:83.00px;top:360.12px;width:1px;height:40.2px;background:#f2f2f2"></div>
<div class="abs" style="left:219.00px;top:360.12px;width:1px;height:40.2px;background:#f2f2f2"></div>
<div class="abs" style="left:335.00px;top:360.12px;width:1px;height:40.2px;background:#f2f2f2"></div>
<div class="abs" style="left:437.00px;top:360.12px;width:1px;height:40.2px;background:#f2f2f2"></div>
<div class="abs" style="left:551.00px;top:360.12px;width:1px;height:40.2px;background:#f2f2f2"></div>
<div class="abs" style="left:667.00px;top:360.12px;width:1px;height:40.2px;background:#f2f2f2"></div>
<div class="abs" style="left:789.00px;top:360.12px;width:1px;height:40.2px;background:#f2f2f2"></div>
<div class="cb off" style="left:5px;top:373.62px"></div>
<svg class="abs" style="left:30.00px;top:359.00px" width="50" height="40" viewBox="0 0 50 40"><rect x="11.8" y="10.7" width="23.8" height="23" rx="1" fill="#94e3fa"/>
<circle cx="23.8" cy="21.9" r="8.1" fill="#7fbde9"/>
<circle cx="20" cy="22" r="1.15" fill="#3f6a8f"/><circle cx="27.3" cy="22" r="1.15" fill="#3f6a8f"/></svg>
<div class="t nm" style="left:89.00px;top:376.12px">Esszimmerlicht</div>
<div class="t tx rm" style="left:226.00px;top:375.62px">Esszimmer</div>
<div class="t tx md" style="left:342.00px;top:375.62px">BSM</div>
<div class="t tx nu" style="right:347.50px;top:375.62px">0 W</div>
<div class="t tx nu" style="right:231.50px;top:375.62px">130,00 Wh</div>
<div class="t tx nu" style="left:674.50px;top:375.62px">11.03.2025 19:32:51</div>
<div class="t tx di" style="left:795.50px;top:375.62px">hdm:HomeMaticIP:3014F711</div>
<div class="abs" style="left:0;top:400.26px;width:890px;height:40px;background:#fff"></div>
<div class="abs" style="left:0;top:400.26px;width:890px;height:1px;background:#f6f6f6"></div>
<div class="abs" style="left:23.00px;top:400.26px;width:1px;height:40.2px;background:#f2f2f2"></div>
<div class="abs" style="left:83.00px;top:400.26px;width:1px;height:40.2px;background:#f2f2f2"></div>
<div class="abs" style="left:219.00px;top:400.26px;width:1px;height:40.2px;background:#f2f2f2"></div>
<div class="abs" style="left:335.00px;top:400.26px;width:1px;height:40.2px;background:#f2f2f2"></div>
<div class="abs" style="left:437.00px;top:400.26px;width:1px;height:40.2px;background:#f2f2f2"></div>
<div class="abs" style="left:551.00px;top:400.26px;width:1px;height:40.2px;background:#f2f2f2"></div>
<div class="abs" style="left:667.00px;top:400.26px;width:1px;height:40.2px;background:#f2f2f2"></div>
<div class="abs" style="left:789.00px;top:400.26px;width:1px;height:40.2px;background:#f2f2f2"></div>
<div class="cb off" style="left:5px;top:413.76px"></div>
<svg class="abs" style="left:30.00px;top:399.00px" width="50" height="40" viewBox="0 0 50 40"><defs><linearGradient id="gu" x1="0" y1="0" x2="0" y2="1"><stop offset="0" stop-color="#b2f8ff"/><stop offset="1" stop-color="#8cdcfb"/></linearGradient></defs>
<path d="M18.2 30V27Q18.2 24.2 15.2 20.2Q13.5 17.6 13.5 15A9.8 9.8 0 0 1 33.1 15Q33.1 17.6 31.4 20.2Q28.4 24.2 28.4 27V30Z" fill="url(#gu)"/>
<rect x="18" y="30" width="10.4" height="1.3" fill="#2c4b66"/></svg>
<div class="t nm" style="left:89.00px;top:416.26px">Garderobe</div>
<div class="t tx rm" style="left:226.00px;top:415.76px">Flur Erdgeschoss</div>
<div class="t tx md" style="left:342.00px;top:415.76px">PLUG_COMPACT</div>
<div class="t tx nu" style="right:347.50px;top:415.76px">0 W</div>
<div class="t tx nu" style="right:231.50px;top:415.76px">16,21 KWh</div>
<div class="t tx nu" style="left:674.50px;top:415.76px">-</div>
<div class="t tx di" style="left:795.50px;top:415.76px">hdm:ZigBee:385b44fff</div>
  </div>
  <div class="abs" style="left:962px;top:297px;width:3px;height:80px;border-radius:2px;background:#858585"></div>
  <div class="abs" style="left:82px;top:644px;width:709px;height:3px;border-radius:2px;background:#858585"></div>
  <div class="abs" style="left:63px;top:204px;width:2px;height:451px;background:#8a8a8a"></div>
  <div class="abs" style="left:63px;top:204px;width:894px;height:2px;background:#585858"></div>
  <div class="abs" style="left:957px;top:204px;width:16px;height:1px;background:#666"></div>
  <div class="abs" style="left:972px;top:204px;width:1px;height:451px;background:#6a6a6a"></div>
  <div class="abs" style="left:63px;top:654px;width:910px;height:1px;background:#6a6a6a"></div>

  <div class="abs" style="left:0;top:684px;width:998px;height:27px;background:#fcf3e6"></div>
  <div class="t" style="left:13px;top:694px;font-size:11.8px;color:#8b4513">17.11.2025 16:26:27: Liste Energiemonitor aktualisiert</div>
</div>
<div class="abs" id="frame"></div>
</body></html>
